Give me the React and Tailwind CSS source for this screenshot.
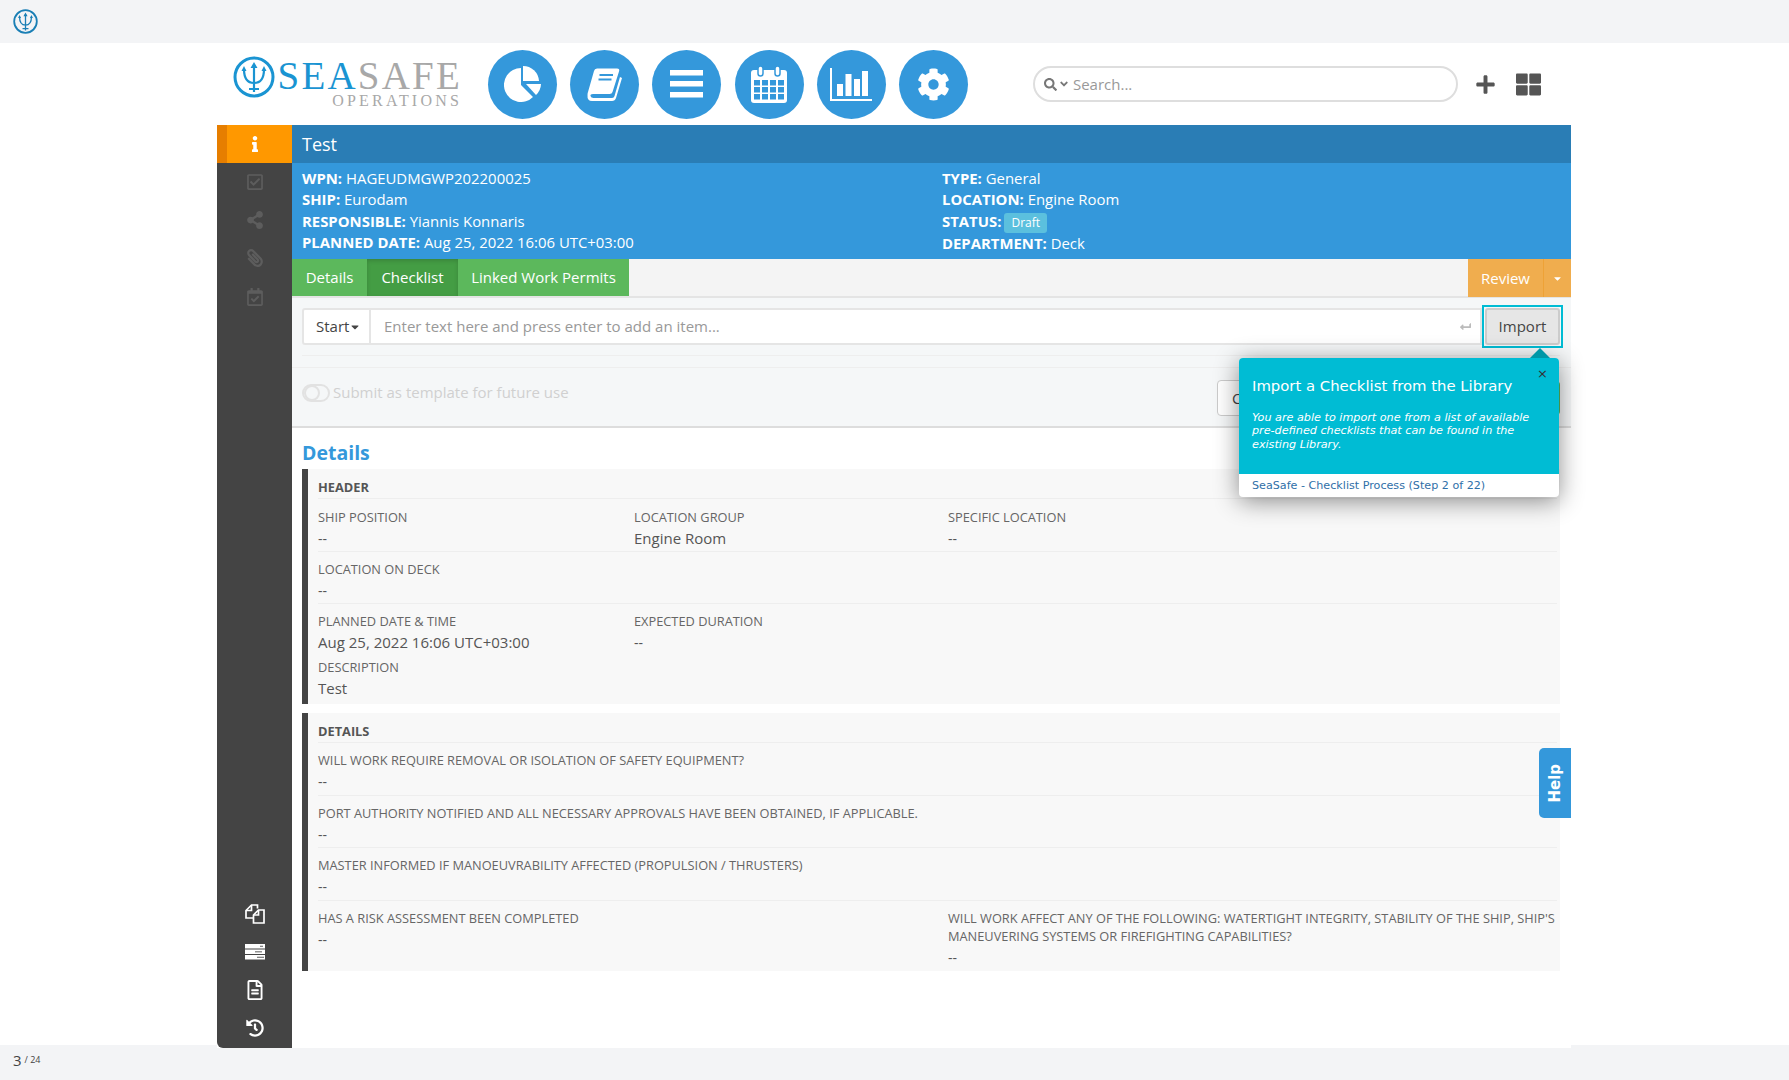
// App.jsx
import React from "react";
import {
  FaAngleDown,
  FaCaretDown,
  FaCog,
  FaHistory,
  FaInfo,
  FaLevelDownAlt,
  FaPaperclip,
  FaPlus,
  FaRegCalendarCheck,
  FaRegCheckSquare,
  FaRegFileAlt,
  FaSearch,
  FaShareAlt,
  FaThLarge,
} from "react-icons/fa";

const Trident = ({ className }) => (
  <svg viewBox="0 0 42 42" className={className} fill="none" stroke="currentColor">
    <circle cx="21" cy="21" r="19" strokeWidth="3" />
    <path d="M21 9v27M11 13c0 9 3 14 10 14s10-5 10-14M16 33h10" strokeWidth="2.2" />
    <path d="M21 6l-3.5 6h7zM11 10l-2.5 5h5zM31 10l-2.5 5h5z" fill="currentColor" stroke="none" />
  </svg>
);

const PieIcon = () => (
  <svg viewBox="0 0 37 36" className="w-[37px] h-[36px]" fill="white">
    <path d="M17 2A17 17 0 1 0 29 31L17 19Z" />
    <path d="M19 0A16 16 0 0 1 35 15L19 15Z" />
    <path d="M22 18L37 18A16 16 0 0 1 32 29Z" />
  </svg>
);

const BookIcon = () => (
  <svg viewBox="0 0 35 33" className="w-[35px] h-[33px]">
    <path
      fill="white"
      d="M10 .5H30Q33 .5 32 3.5L25.5 24Q25 26 22.5 26H6Q3 26 3.5 28Q4 30 6.5 30H25Q27 30 27.5 28L33 9L35 10L29 30Q28 33 25 33H5Q0 33 .5 27Q.5 25 1 24L7 3Q7.5 .5 10 .5Z"
    />
    <path d="M12.5 7H26M11.5 11.500H24.500" stroke="#3498db" strokeWidth="2" />
  </svg>
);

const BarsIcon = () => (
  <svg viewBox="0 0 33 28" className="w-[33px] h-[28px]" fill="white">
    <rect width="33" height="5.500" />
    <rect y="11" width="33" height="5.500" />
    <rect y="22" width="33" height="5.500" />
  </svg>
);

const CalendarIcon = () => (
  <svg viewBox="0 0 36 37" className="w-[36px] h-[37px]">
    <path fill="white" d="M3 4h30a3 3 0 0 1 3 3v27a3 3 0 0 1-3 3H3a3 3 0 0 1-3-3V7a3 3 0 0 1 3-3Z" />
    <rect x="7" y="0" width="5" height="10" rx="2.500" fill="white" stroke="#3498db" strokeWidth="1.500" />
    <rect x="24" y="0" width="5" height="10" rx="2.500" fill="white" stroke="#3498db" strokeWidth="1.500" />
    {[14, 21, 28].map((y) =>
      [3, 11, 19, 27].map((x) => (
        <rect key={`${x}-${y}`} x={x} y={y} width="6" height="5.500" fill="#3498db" />
      ))
    )}
  </svg>
);

const ChartIcon = () => (
  <svg viewBox="0 0 42 33" className="w-[42px] h-[33px]" fill="white">
    <rect width="2" height="33" />
    <rect y="31" width="42" height="2" />
    <rect x="7" y="16" width="6" height="12" />
    <rect x="15.500" y="6" width="6" height="22" />
    <rect x="24" y="11" width="6" height="17" />
    <rect x="32" y="3" width="6" height="25" />
  </svg>
);

const FilesIcon = () => (
  <svg viewBox="0 0 20 20" className="w-[20px] h-[20px]" fill="none" stroke="white" strokeWidth="1.700">
    <path d="M12.500 4.500V1H6.500L1 6.500V14H8.500" />
    <path d="M6.500 1V6.500H1" />
    <path d="M13.500 6H19V19H8.500V11Z" />
    <path d="M13.500 6V11H8.500" />
  </svg>
);

const ServerIcon = () => (
  <svg viewBox="0 0 20 16" className="w-[20px] h-[16px]">
    {[0, 5.500, 11].map((y) => (
      <g key={y}>
        <rect y={y} width="20" height="4.500" fill="white" />
        <rect x={y === 0 ? 15 : y === 5.5 ? 10 : 12} y={y + 1.7} width={y === 0 ? 3 : 7} height="1.200" fill="#777" />
      </g>
    ))}
  </svg>
);

const navIcons = [
  <PieIcon key="pie" />,
  <BookIcon key="book" />,
  <BarsIcon key="bars" />,
  <CalendarIcon key="calendar" />,
  <ChartIcon key="chart" />,
  <FaCog key="cog" className="text-white text-[33px]" />,
];

const TopNav = () => (
  <div className="h-[82px] flex items-center pl-[233px]">
    <div className="flex items-center w-[255px] shrink-0 -mt-[1px]">
      <Trident className="w-[42px] h-[42px] text-[#1a94d2] mt-[-14px]" />
      <div className="ml-[3px] flex flex-col items-end font-['Liberation_Serif',serif] w-[184px]">
        <div className="text-[39px] leading-[34px] tracking-[2.2px]">
          <span className="text-[#1a94d2]">SEA</span>
          <span className="text-[#a8a8a8]">SAFE</span>
        </div>
        <div className="text-[16px] leading-[16px] tracking-[3.2px] text-[#a8a8a8]">OPERATIONS</div>
      </div>
    </div>
    <div className="flex gap-[13.2px]">
      {navIcons.map((icon, i) => (
        <div key={i} className="w-[69px] h-[69px] rounded-full bg-[#3498db] flex items-center justify-center">
          {icon}
        </div>
      ))}
    </div>
    <div className="ml-[65px] w-[425px] h-[36px] rounded-full border-2 border-[#dedede] flex items-center pl-[9px] text-[15px] text-[#999]">
      <FaSearch className="text-[#777] text-[13px]" />
      <FaAngleDown className="text-[#777] text-[12px] ml-[1px]" />
      <span className="ml-[3px]">Search...</span>
    </div>
    <FaPlus className="ml-[17px] text-[#555] text-[21px]" />
    <FaThLarge className="ml-[20px] text-[#555] text-[25px]" />
  </div>
);

const Sidebar = () => (
  <aside className="w-[75px] shrink-0 bg-[#444] rounded-bl-[6px] flex flex-col justify-between overflow-hidden">
    <div>
      <div className="h-[38px] bg-[#ff9800] border-l-[10px] border-[#e67e00] flex items-center justify-center pr-[10px]">
        <FaInfo className="text-white text-[16px]" />
      </div>
      <div className="text-[#5d5d5d] text-[18px]">
        <div className="h-[38px] flex items-center justify-center"><FaRegCheckSquare /></div>
        <div className="h-[38px] flex items-center justify-center"><FaShareAlt /></div>
        <div className="h-[38px] flex items-center justify-center"><FaPaperclip className="-scale-x-100" /></div>
        <div className="h-[40px] flex items-center justify-center"><FaRegCalendarCheck /></div>
      </div>
    </div>
    <div className="text-white text-[20px] pb-[1px]">
      <div className="h-[38px] flex items-center justify-center"><FilesIcon /></div>
      <div className="h-[38px] flex items-center justify-center"><ServerIcon /></div>
      <div className="h-[38px] flex items-center justify-center"><FaRegFileAlt /></div>
      <div className="h-[38px] flex items-center justify-center"><FaHistory className="text-[18px]" /></div>
    </div>
  </aside>
);

const Info = ({ label, children }) => (
  <div>
    <span className="font-bold">{label}:</span> {children}
  </div>
);

const Field = ({ label, value, big, className }) => (
  <div className={className}>
    <div className="text-[12.8px] leading-[18px] text-[#666]">{label}</div>
    <div className={`leading-[18px] ${big ? "mt-[3px] text-[15px] text-[#555]" : "mt-[4px] text-[14px] text-[#555]"}`}>
      {value}
    </div>
  </div>
);

const Section = ({ title, className, children }) => (
  <section className={`border-l-[6px] border-[#444] bg-[#f8f8f8] ${className}`}>
    <div className="ml-[10px] mr-[3px] text-[12.8px] font-bold text-[#555] leading-[18px] pt-[9px] h-[29px]">
      {title}
    </div>
    {children}
  </section>
);

const Row = ({ className, children }) => (
  <div className={`ml-[10px] mr-[3px] border-t border-[#eee] ${className}`}>{children}</div>
);

const Popover = () => (
  <div className="absolute left-[1022px] top-[233px] w-[320px] h-[139px] z-20 rounded-[4px] bg-white shadow-[0_4px_24px_rgba(0,0,0,0.45)] font-['DejaVu_Sans',sans-serif] flex flex-col">
    <div className="absolute -top-[10px] left-[291px] w-0 h-0 border-x-[10px] border-x-transparent border-b-[10px] border-b-[#0097a7]" />
    <div className="relative flex-1 bg-[#00bcd4] rounded-t-[4px] px-[13px] pt-[18px] text-white">
      <div className="absolute top-[8px] right-[11px] text-[#333] text-[13px] leading-[16px]">×</div>
      <div className="text-[14.85px] leading-[20px]">Import a Checklist from the Library</div>
      <p className="mt-[15px] text-[11.2px] leading-[13.3px] italic">
        You are able to import one from a list of available pre-defined checklists that can be found in the existing Library.
      </p>
    </div>
    <div className="h-[23px] px-[13px] text-[11.15px] leading-[23px] text-[#2f6fa8] rounded-b-[4px]">
      SeaSafe - Checklist Process (Step 2 of 22)
    </div>
  </div>
);

const Main = () => (
  <div className="flex-1 min-w-0">
    <div className="h-[38px] bg-[#2a7db5] text-white text-[18px] leading-[38px] pl-[10px]">Test</div>
    <div className="h-[96px] bg-[#3498db] text-white text-[14.9px] leading-[21.33px] pl-[10px] pt-[5px] grid grid-cols-[640px_1fr]">
      <div>
        <Info label="WPN">HAGEUDMGWP202200025</Info>
        <Info label="SHIP">Eurodam</Info>
        <Info label="RESPONSIBLE">Yiannis Konnaris</Info>
        <Info label="PLANNED DATE">Aug 25, 2022 16:06 UTC+03:00</Info>
      </div>
      <div>
        <Info label="TYPE">General</Info>
        <Info label="LOCATION">Engine Room</Info>
        <div className="flex items-center">
          <span className="font-bold">STATUS:</span>
          <span className="ml-[3px] mt-[2px] bg-[#5bc0de] rounded-[3px] px-[7px] h-[20px] text-[12px] leading-[20px]">Draft</span>
        </div>
        <Info label="DEPARTMENT">Deck</Info>
      </div>
    </div>
    <div className="h-[39px] bg-[#f4f4f4] border-b-2 border-[#e4e4e4] flex justify-between text-[15px] text-white">
      <div className="flex h-[37px] leading-[37px] text-center">
        <div className="w-[75px] bg-[#5cb85c]">Details</div>
        <div className="w-[91px] bg-[#449d44] shadow-[inset_0_2px_4px_rgba(0,0,0,0.15)]">Checklist</div>
        <div className="w-[171px] bg-[#5cb85c]">Linked Work Permits</div>
      </div>
      <div className="flex h-[38px] leading-[38px] bg-[#f0ad4e]">
        <div className="w-[75px] text-center">Review</div>
        <div className="w-[28px] border-l border-[#eea236] flex items-center justify-center">
          <FaCaretDown className="text-[11px]" />
        </div>
      </div>
    </div>

    <div className="h-[130px] bg-[#f5f7f8] border-b-2 border-[#ddd]">
      <div className="pt-[10px] pl-[10px] pr-[11px]">
        <div className="flex h-[37px]">
          <div className="w-[69px] border-2 border-[#e5e5e5] rounded-l-[3px] bg-white flex items-center pl-[12px] text-[15px] text-[#444]">
            Start
            <FaCaretDown className="text-[12px]" />
          </div>
          <div className="flex-1 border-y-2 border-r-2 border-[#e5e5e5] bg-white flex items-center justify-between pl-[13px] pr-[9px] text-[15px] text-[#999]">
            <span>Enter text here and press enter to add an item...</span>
            <FaLevelDownAlt className="text-[#bbb] text-[11px] rotate-90" />
          </div>
          <div className="ml-[3px] outline-2 outline-offset-1 outline-[#00bcd4]">
            <button className="block w-[75px] h-[37px] bg-[#e6e6e6] border-2 border-[#ccc] rounded-[3px] text-[15px] text-[#444]">
              Import
            </button>
          </div>
        </div>
        <div className="mt-[10px] border-t border-[#eee]" />
      </div>
      <div className="mt-[11px] border-t border-[#eee] pl-[10px] pr-[11px] flex items-center justify-between h-[58px]">
        <div className="flex items-center mb-[8px] text-[15px] text-[#d0d0d0]">
          <div className="w-[28px] h-[18px] rounded-full border-2 border-[#e2e2e2] flex items-center">
            <div className="w-[16px] h-[16px] rounded-full border-2 border-[#e2e2e2]" />
          </div>
          <span className="ml-[3px]">Submit as template for future use</span>
        </div>
        <div className="flex items-center mt-[2px]">
          <div className="w-[120px] h-[36px] bg-white border border-[#ccc] rounded-[4px] pl-[14px] text-[15px] leading-[34px] text-[#444]">
            Cancel
          </div>
          <div className="ml-[4px] w-[219px] h-[34px] bg-[#5cb85c] rounded-r-[4px]" />
        </div>
      </div>
    </div>

    <div className="pl-[10px] pr-[11px]">
      <h2 className="h-[41px] pt-[11px] text-[19.5px] leading-[28px] font-bold text-[#3498db]">Details</h2>
      <Section title="HEADER" className="h-[235px]">
        <Row className="pt-[9px] grid grid-cols-[316px_314px_1fr]">
          <Field label="SHIP POSITION" value="--" />
          <Field label="LOCATION GROUP" value="Engine Room" big />
          <Field label="SPECIFIC LOCATION" value="--" />
        </Row>
        <Row className="mt-[3px] pt-[8px]">
          <Field label="LOCATION ON DECK" value="--" />
        </Row>
        <Row className="mt-[3px] pt-[8px]">
          <div className="grid grid-cols-[316px_314px_1fr]">
            <Field label="PLANNED DATE & TIME" value="Aug 25, 2022 16:06 UTC+03:00" big />
            <Field label="EXPECTED DURATION" value="--" />
          </div>
          <Field className="mt-[6px]" label="DESCRIPTION" value="Test" big />
        </Row>
      </Section>
      <Section title="DETAILS" className="mt-[9px] h-[258px]">
        <Row className="h-[53px] pt-[8px]">
          <Field label="WILL WORK REQUIRE REMOVAL OR ISOLATION OF SAFETY EQUIPMENT?" value="--" />
        </Row>
        <Row className="h-[52px] pt-[8px]">
          <Field label="PORT AUTHORITY NOTIFIED AND ALL NECESSARY APPROVALS HAVE BEEN OBTAINED, IF APPLICABLE." value="--" />
        </Row>
        <Row className="h-[53px] pt-[8px]">
          <Field label="MASTER INFORMED IF MANOEUVRABILITY AFFECTED (PROPULSION / THRUSTERS)" value="--" />
        </Row>
        <Row className="pt-[8px] grid grid-cols-[630px_1fr]">
          <Field label="HAS A RISK ASSESSMENT BEEN COMPLETED" value="--" />
          <Field
            label="WILL WORK AFFECT ANY OF THE FOLLOWING: WATERTIGHT INTEGRITY, STABILITY OF THE SHIP, SHIP'S MANEUVERING SYSTEMS OR FIREFIGHTING CAPABILITIES?"
            value="--"
          />
        </Row>
      </Section>
    </div>
  </div>
);

const App = () => (
  <div className="w-[1789px] h-[1080px] overflow-hidden bg-white font-['Open_Sans',sans-serif]">
    <div className="h-[43px] bg-[#f3f4f6] flex items-center pl-[13px]">
      <Trident className="w-[25px] h-[25px] text-[#1a7fb5]" />
    </div>
    <TopNav />
    <div className="relative z-10 ml-[217px] w-[1354px] h-[923px] flex bg-white">
      <Sidebar />
      <Main />
      <Popover />
      <div className="absolute right-0 top-[623px] w-[32px] h-[70px] z-10 bg-[#3498db] rounded-l-[5px] flex items-center justify-center">
        <span className="-rotate-90 text-white font-bold text-[15px] font-['DejaVu_Sans',sans-serif]">Help</span>
      </div>
    </div>
    <div className="-mt-[3px] h-[35px] bg-[#f3f4f6] flex items-center pl-[13px] pb-[5px] text-[#444]">
      <span className="text-[15px]">3</span>
      <span className="ml-[3px] text-[9px]">/ 24</span>
    </div>
  </div>
);

export default App;
